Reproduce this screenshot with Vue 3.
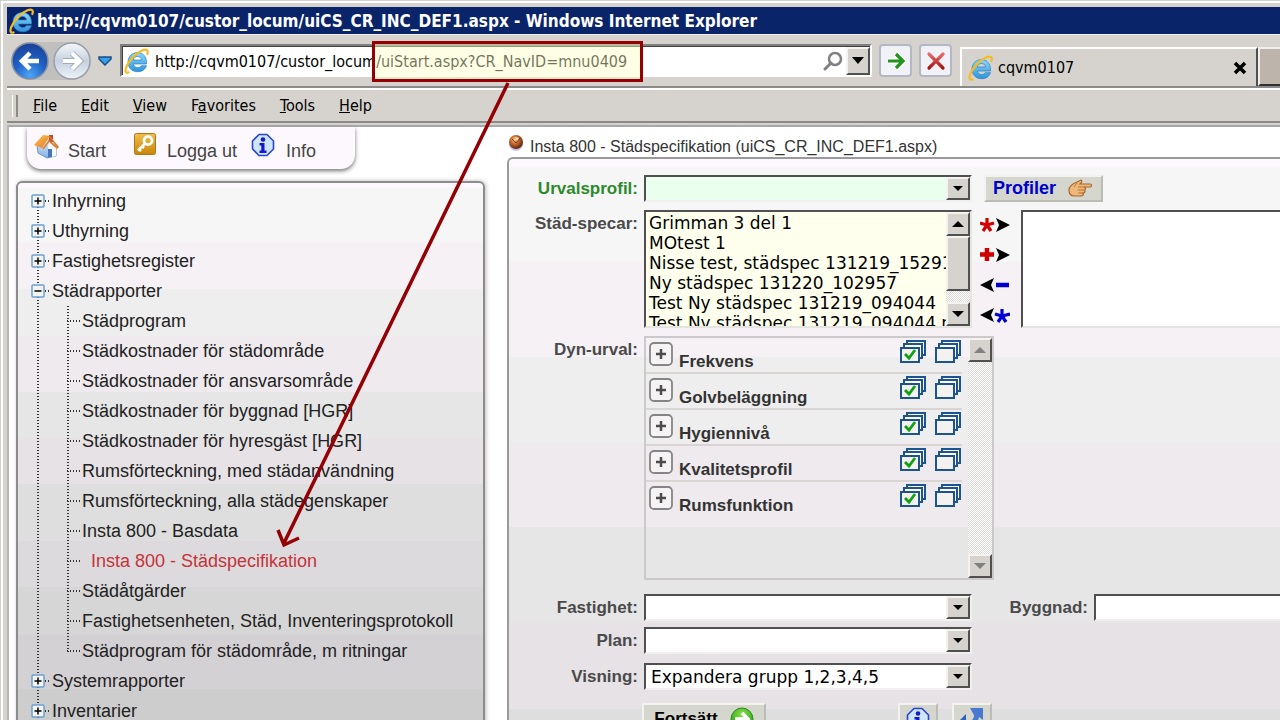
<script setup>
import { ref } from 'vue'

const address = ref('http://cqvm0107/custor_locum/uiStart.aspx?CR_NavID=mnu0409')

const menus = [
  ['', 'F', 'ile'],
  ['', 'E', 'dit'],
  ['', 'V', 'iew'],
  ['F', 'a', 'vorites'],
  ['', 'T', 'ools'],
  ['', 'H', 'elp'],
]

const tree = [
  { name: 'Inhyrning' },
  { name: 'Uthyrning' },
  { name: 'Fastighetsregister' },
  {
    name: 'Städrapporter',
    children: [
      'Städprogram',
      'Städkostnader för städområde',
      'Städkostnader för ansvarsområde',
      'Städkostnader för byggnad [HGR]',
      'Städkostnader för hyresgäst [HGR]',
      'Rumsförteckning, med städanvändning',
      'Rumsförteckning, alla städegenskaper',
      'Insta 800 - Basdata',
      'Insta 800 - Städspecifikation',
      'Städåtgärder',
      'Fastighetsenheten, Städ, Inventeringsprotokoll',
      'Städprogram för städområde, m ritningar',
    ],
  },
  { name: 'Systemrapporter' },
  { name: 'Inventarier' },
]
const current = 'Insta 800 - Städspecifikation'

const specs = [
  'Grimman 3 del 1',
  'MOtest 1',
  'Nisse test, städspec 131219_152917',
  'Ny städspec 131220_102957',
  'Test Ny städspec 131219_094044',
  'Test Ny städspec 131219_094044 ny',
]

const groups = ['Frekvens', 'Golvbeläggning', 'Hygiennivå', 'Kvalitetsprofil', 'Rumsfunktion']
</script>

<template>
  <div class="window">
    <svg class="defs" width="0" height="0" aria-hidden="true">
      <defs>
        <linearGradient id="ieBlue" x1="0" y1="0" x2="0" y2="1">
          <stop offset="0" stop-color="#8ad8fa" />
          <stop offset="1" stop-color="#2f93dc" />
        </linearGradient>
        <linearGradient id="roof" x1="0" y1="0" x2="1" y2="1">
          <stop offset="0" stop-color="#ffc35a" />
          <stop offset="1" stop-color="#e8791c" />
        </linearGradient>
        <linearGradient id="wall" x1="0" y1="0" x2="0" y2="1">
          <stop offset="0" stop-color="#e6f1ff" />
          <stop offset="1" stop-color="#7fb0e4" />
        </linearGradient>
        <linearGradient id="keyBg" x1="0" y1="0" x2="0" y2="1">
          <stop offset="0" stop-color="#f0bf4c" />
          <stop offset="1" stop-color="#c98509" />
        </linearGradient>
        <radialGradient id="ball" cx=".4" cy=".35" r=".65">
          <stop offset="0" stop-color="#ffd9a8" />
          <stop offset=".35" stop-color="#d47a35" />
          <stop offset="1" stop-color="#5f2408" />
        </radialGradient>
        <radialGradient id="navBlue" cx=".5" cy=".9" r=".9">
          <stop offset="0" stop-color="#4ea6f4" />
          <stop offset=".5" stop-color="#1f5fc4" />
          <stop offset="1" stop-color="#1b3f94" />
        </radialGradient>
        <linearGradient id="navPale" x1="0" y1="0" x2="0" y2="1">
          <stop offset="0" stop-color="#f6f8fb" />
          <stop offset=".5" stop-color="#c5d0de" />
          <stop offset="1" stop-color="#edf4fb" />
        </linearGradient>
        <radialGradient id="goGreen" cx=".5" cy=".3" r=".7">
          <stop offset="0" stop-color="#8be04f" />
          <stop offset="1" stop-color="#239a12" />
        </radialGradient>
        <linearGradient id="crossRed" x1="0" y1="0" x2="0" y2="1">
          <stop offset="0" stop-color="#ea6a6a" />
          <stop offset="1" stop-color="#a81414" />
        </linearGradient>
        <symbol id="ie" viewBox="0 0 26 26">
          <path d="M22.500 16H9.500c.3 2.200 1.900 3.600 4.200 3.600 1.700 0 2.900-.7 3.500-1.900h5.200c-1.200 4-4.400 6-8.800 6C7.900 23.700 4 19.800 4 14.200S7.900 4.600 13.500 4.600c5.900 0 9.500 4.600 9 11.400zM9.400 12h8.100c-.2-2.200-1.700-3.500-4-3.500S9.700 9.800 9.400 12z" fill="url(#ieBlue)" stroke="#2b7fc0" stroke-width=".7" />
          <path d="M4.500 24.500C1.500 25.500.6 23 2.400 18.800 5 12.500 12 4.800 18.500 2.300c4.200-1.600 6.200-.3 4.900 3.700" fill="none" stroke="#f6bb22" stroke-width="2.200" stroke-linecap="round" />
        </symbol>
        <symbol id="info" viewBox="0 0 24 24">
          <path d="M8 1.500h8L22.500 8v8L16 22.500H8L1.500 16V8z" fill="#cfe6ff" stroke="#2a46d0" stroke-width="1.600" stroke-linejoin="round" />
          <circle cx="12" cy="6.500" r="2.300" fill="#1717d0" />
          <path d="M8.500 10h5v7.500h2V20h-7v-2.500h1.800v-5H8.500z" fill="#1717d0" />
        </symbol>
        <symbol id="stack" viewBox="0 0 26 23">
          <g fill="#fff" stroke="#1c548f" stroke-width="2">
            <path d="M7 1h18v14H7z" />
            <path d="M4 4h18v14H4z" />
            <path d="M1 8h18v14H1z" fill="#f4f2f0" />
          </g>
        </symbol>
      </defs>
    </svg>

    <header class="titlebar">
      <svg width="26" height="26"><use href="#ie" /></svg>
      <h1>http://cqvm0107/custor_locum/uiCS_CR_INC_DEF1.aspx - Windows Internet Explorer</h1>
    </header>

    <div class="toolbar">
      <div class="nav">
        <button type="button" aria-label="Back">
          <svg width="38" height="38" viewBox="0 0 38 38">
            <circle cx="19" cy="19" r="18" fill="url(#navBlue)" stroke="#8590a4" stroke-width="1.500" />
            <path d="M19 11l-8 8 8 8M12 19h16" fill="none" stroke="#fff" stroke-width="4.500" />
          </svg>
        </button>
        <button type="button" aria-label="Forward">
          <svg width="38" height="38" viewBox="0 0 38 38">
            <circle cx="19" cy="19" r="18" fill="url(#navPale)" stroke="#9aa0aa" stroke-width="1.500" />
            <path d="M19 11l8 8-8 8M26 19H10" fill="none" stroke="#9eabbb" stroke-width="6" />
            <path d="M19 11l8 8-8 8M26 19H10" fill="none" stroke="#fff" stroke-width="4" />
          </svg>
        </button>
      </div>
      <button type="button" class="recent" aria-label="Recent pages">
        <svg width="14" height="10" viewBox="0 0 14 10"><path d="M1 1h12v2L7 9 1 3z" fill="#35a0e8" stroke="#1d4c86" stroke-width="1.500" /></svg>
      </button>
      <div class="address">
        <svg width="26" height="26"><use href="#ie" /></svg>
        <input v-model="address" type="text" aria-label="Address" />
        <svg class="search" width="20" height="20" viewBox="0 0 20 20"><circle cx="12" cy="8" r="6" fill="none" stroke="#808080" stroke-width="2.500" /><path d="M8 12l-6 6" stroke="#808080" stroke-width="3" stroke-linecap="round" /></svg>
        <button type="button" class="raised drop" aria-label="Show address list">
          <svg width="12" height="7" viewBox="0 0 12 7"><path d="M0 0h12L6 7z" /></svg>
        </button>
      </div>
      <button type="button" class="tool" aria-label="Go">
        <svg width="20" height="20" viewBox="0 0 20 20"><path d="M10 3l7 7-7 7M16 10H2" fill="none" stroke="#fff" stroke-width="6" /><path d="M10 3l7 7-7 7M16 10H2" fill="none" stroke="#22931b" stroke-width="3.200" /></svg>
      </button>
      <button type="button" class="tool" aria-label="Stop">
        <svg width="20" height="20" viewBox="0 0 20 20"><path d="M3 3l7 7-7 7M17 3l-7 7 7 7" fill="none" stroke="url(#crossRed)" stroke-width="3.200" stroke-linecap="round" /></svg>
      </button>
      <div class="tab">
        <svg width="26" height="26"><use href="#ie" /></svg>
        <span>cqvm0107</span>
        <button type="button" aria-label="Close tab">
          <svg width="14" height="14" viewBox="0 0 14 14"><path d="M2 2l10 10M12 2L2 12" stroke="#000" stroke-width="3.500" /></svg>
        </button>
      </div>
      <button type="button" class="newtab" aria-label="New tab"></button>
    </div>

    <nav class="menubar">
      <a v-for="m in menus" :key="m[1]" href="#">{{ m[0] }}<u>{{ m[1] }}</u>{{ m[2] }}</a>
    </nav>

    <main class="page">
      <section class="side">
        <nav class="shortcuts">
          <a href="#">
            <svg width="26" height="26" viewBox="0 0 26 26">
              <path d="M16 2h4v7h-4z" fill="#c8432c" />
              <path d="M4 12l9-7 10 8v10l-9 2-9-5z" fill="url(#wall)" stroke="#6b94c8" />
              <path d="M16 8l7 6v9l-8 2V14z" fill="#f3f8ff" />
              <path d="M15 16h4v8l-4 1z" fill="#4676b8" />
              <path d="M1 12L10 2l7 1-8 12z" fill="url(#roof)" />
              <path d="M16 3l9 11-1 1-8-7-6 8" fill="none" stroke="#e8791c" stroke-width="1.500" />
            </svg>
            <span>Start</span>
          </a>
          <a href="#">
            <svg width="22" height="22" viewBox="0 0 22 22">
              <rect x=".5" y=".5" width="21" height="21" rx="2" fill="url(#keyBg)" stroke="#ad7812" />
              <circle cx="14" cy="7.500" r="4" fill="none" stroke="#fff" stroke-width="2.800" />
              <path d="M11 10.500l-7 7M5 16l2 2M8 13l2 2" stroke="#fff" stroke-width="2.500" />
            </svg>
            <span>Logga ut</span>
          </a>
          <a href="#">
            <svg width="24" height="24"><use href="#info" /></svg>
            <span>Info</span>
          </a>
        </nav>

        <div class="treebox">
          <ul class="tree">
            <li v-for="n in tree" :key="n.name">
              <div class="row">
                <button type="button" :aria-label="n.name" :aria-expanded="!!n.children">
                  <svg width="14" height="14" viewBox="0 0 14 14">
                    <rect x="1" y="1" width="12" height="12" rx="1" fill="#f3f3f0" stroke="#6ca0d4" stroke-width="1.500" />
                    <path :d="n.children ? 'M3.500 7h7' : 'M3.500 7h7M7 3.500v7'" stroke="#000" stroke-width="1.500" />
                  </svg>
                </button>
                <i class="dots"></i>
                <a href="#">{{ n.name }}</a>
              </div>
              <ul v-if="n.children" class="sub">
                <li v-for="c in n.children" :key="c" class="row">
                  <i class="dots"></i>
                  <a href="#" :class="{ current: c === current }">{{ c }}</a>
                </li>
              </ul>
            </li>
          </ul>
        </div>
      </section>

      <section class="content">
        <h2>
          <svg width="16" height="18" viewBox="0 0 16 18"><circle cx="8" cy="10" r="7" fill="#c9c3ea" /><circle cx="8" cy="8" r="7" fill="url(#ball)" /><path d="M4 5l4 4 4-5" stroke="#7a3411" fill="none" /><path d="M7 3l4 1-2 3z" fill="#ffe9cc" /></svg>
          Insta 800 - Städspecifikation (uiCS_CR_INC_DEF1.aspx)
        </h2>

        <form class="panel" @submit.prevent>
          <div class="line">
            <label for="profil" class="green">Urvalsprofil:</label>
            <div class="combo mint">
              <select id="profil"><option></option></select>
              <span class="raised"><svg width="10" height="5" viewBox="0 0 10 5"><path d="M0 0h10L5 5z" /></svg></span>
            </div>
            <button type="button" class="flat profiles">
              Profiler
              <svg width="24" height="20" viewBox="0 0 24 20">
                <path d="M9 3L13 1c1 0 1 2 0 3l-1 1h10c2 0 2 3 0 3h-6c2 1 2 3 0 3 2 1 1 3-1 3 1 1 0 3-2 3H6c-3 0-5-2-5-6s3-6 8-8z" fill="#f0b878" stroke="#a8682c" stroke-width="1.200" />
                <path d="M10 8h7M10 11h6M10 14h5M9 4l-3 4" stroke="#b8763a" fill="none" />
              </svg>
            </button>
          </div>

          <div class="line">
            <label for="specs">Städ-specar:</label>
            <div class="listbox">
              <select id="specs" multiple>
                <option v-for="s in specs" :key="s">{{ s }}</option>
              </select>
              <div class="scroll">
                <button type="button" class="raised" aria-label="Scroll up"><svg width="12" height="6" viewBox="0 0 12 6"><path d="M0 6h12L6 0z" /></svg></button>
                <span class="raised thumb"></span>
                <span class="track"></span>
                <button type="button" class="raised" aria-label="Scroll down"><svg width="12" height="6" viewBox="0 0 12 6"><path d="M0 0h12L6 6z" /></svg></button>
              </div>
            </div>
            <div class="transfer">
              <button type="button" aria-label="Add all">
                <svg width="30" height="16" viewBox="0 0 30 16"><path d="M7 8V1M7 8L0 6M7 8l7-2M7 8l-4 6M7 8l4 6" stroke="#d00000" stroke-width="3.200" /><path d="M16 1l14 7-14 7 3-7z" /></svg>
              </button>
              <button type="button" aria-label="Add">
                <svg width="30" height="16" viewBox="0 0 30 16"><path d="M7 1v13M0 7.500h14" stroke="#d00000" stroke-width="4.500" /><path d="M16 1l14 7-14 7 3-7z" /></svg>
              </button>
              <button type="button" aria-label="Remove">
                <svg width="30" height="16" viewBox="0 0 30 16"><path d="M14 1L0 8l14 7-3-7z" /><path d="M16 8h13" stroke="#0000d0" stroke-width="4.500" /></svg>
              </button>
              <button type="button" aria-label="Remove all">
                <svg width="30" height="16" viewBox="0 0 30 16"><path d="M14 1L0 8l14 7-3-7z" /><path d="M22 9V2M22 9l-7-2M22 9l8-2M22 9l-4 6M22 9l4 6" stroke="#0000d0" stroke-width="3.200" /></svg>
              </button>
            </div>
            <select class="chosen" multiple aria-label="Valda städ-specar"></select>
          </div>

          <div class="line">
            <span class="caption">Dyn-urval:</span>
            <div class="dyn">
              <ul>
                <li v-for="g in groups" :key="g">
                  <button type="button" class="expand" :aria-label="g">
                    <svg width="24" height="24" viewBox="0 0 24 24"><rect x="1" y="1" width="22" height="22" rx="4" fill="#f5f3f3" stroke="#858585" stroke-width="1.800" /><path d="M7 12h10M12 7v10" stroke="#4c4c4c" stroke-width="2.500" /></svg>
                  </button>
                  <b>{{ g }}</b>
                  <button type="button" aria-label="Markera alla">
                    <svg width="26" height="23" viewBox="0 0 26 23"><use href="#stack" width="26" height="23" /><path d="M5 14l4 4 6-8" fill="none" stroke="#12a012" stroke-width="2.800" /></svg>
                  </button>
                  <button type="button" aria-label="Avmarkera alla">
                    <svg width="26" height="23"><use href="#stack" width="26" height="23" /></svg>
                  </button>
                </li>
              </ul>
              <div class="scroll idle">
                <button type="button" class="raised" aria-label="Scroll up"><svg width="12" height="6" viewBox="0 0 12 6"><path d="M0 6h12L6 0z" /></svg></button>
                <span class="track"></span>
                <button type="button" class="raised" aria-label="Scroll down"><svg width="12" height="6" viewBox="0 0 12 6"><path d="M0 0h12L6 6z" /></svg></button>
              </div>
            </div>
          </div>

          <div class="line apart">
            <label for="fastighet">Fastighet:</label>
            <div class="combo">
              <select id="fastighet"><option></option></select>
              <span class="raised"><svg width="10" height="5" viewBox="0 0 10 5"><path d="M0 0h10L5 5z" /></svg></span>
            </div>
            <label for="byggnad" class="second">Byggnad:</label>
            <div class="combo">
              <select id="byggnad"><option></option></select>
              <span class="raised"><svg width="10" height="5" viewBox="0 0 10 5"><path d="M0 0h10L5 5z" /></svg></span>
            </div>
          </div>

          <div class="line near">
            <label for="plan">Plan:</label>
            <div class="combo">
              <select id="plan"><option></option></select>
              <span class="raised"><svg width="10" height="5" viewBox="0 0 10 5"><path d="M0 0h10L5 5z" /></svg></span>
            </div>
          </div>

          <div class="line">
            <label for="visning">Visning:</label>
            <div class="combo">
              <select id="visning"><option>Expandera grupp 1,2,3,4,5</option></select>
              <span class="raised"><svg width="10" height="5" viewBox="0 0 10 5"><path d="M0 0h10L5 5z" /></svg></span>
            </div>
          </div>

          <div class="actions">
            <button type="submit" class="flat go">
              Fortsätt
              <svg width="24" height="24" viewBox="0 0 24 24"><circle cx="12" cy="12" r="11" fill="url(#goGreen)" stroke="#2f8f1c" /><path d="M12 6l6 6-6 6M17 12H5" fill="none" stroke="#fff" stroke-width="3.500" /></svg>
            </button>
            <button type="button" class="flat" aria-label="Info">
              <svg width="24" height="24"><use href="#info" /></svg>
            </button>
            <button type="button" class="flat" aria-label="Återställ">
              <svg width="26" height="26" viewBox="0 0 26 26"><path d="M11 2h13v12l-4-3c-1 6-5 9-11 9v-5c4 0 6-2 6-6z" fill="#4a78cf" /><path d="M1 14l6-6v12z" fill="#2f5fbd" /></svg>
            </button>
          </div>
        </form>
      </section>
    </main>

    <div class="callout"></div>
    <svg class="pointer" width="240" height="470" viewBox="0 0 240 470">
      <path d="M236 2L12 462M6 449l6 15 15-7" fill="none" stroke="#940004" stroke-width="3.500" />
    </svg>
  </div>
</template>

<style>
html,
body {
  margin: 0;
  background: #fff;
}
</style>

<style scoped>
* {
  box-sizing: border-box;
}
.window {
  position: relative;
  display: flex;
  flex-direction: column;
  height: 100vh;
  overflow: hidden;
  padding: 3px 0 0 3px;
  border-top: 1px solid #d0d0cc;
  border-left: 1px solid #d0d0cc;
  background: #d6d3ce;
  box-shadow: inset 2px 2px 0 #fff;
  font-family: "Liberation Sans", Arial, sans-serif;
  color: #000;
}
.defs {
  position: absolute;
}
button {
  padding: 0;
  border: 0;
  background: none;
  font: inherit;
  color: inherit;
}
svg {
  display: block;
  flex: none;
}
a {
  color: inherit;
  text-decoration: none;
}
ul {
  margin: 0;
  padding: 0;
  list-style: none;
}
.titlebar,
.toolbar,
.menubar,
.page {
  margin-left: 3px;
}
.titlebar {
  display: flex;
  align-items: center;
  gap: 2px;
  flex: none;
  height: 27px;
  margin-top: 3px;
  padding-left: 2px;
  background: #0a246a;
  color: #fff;
}
.titlebar h1 {
  margin: 0;
  font: bold 17px/26px "DejaVu Sans Condensed", "DejaVu Sans", sans-serif;
  white-space: nowrap;
}
.toolbar {
  display: flex;
  align-items: center;
  flex: none;
  height: 54px;
  padding-left: 4px;
  border-top: 1px solid #f2f0ee;
  border-bottom: 2px solid #8c8a88;
  font: 16px/20px "DejaVu Sans Condensed", "DejaVu Sans", sans-serif;
}
.nav {
  display: flex;
  gap: 4px;
  border-radius: 20px;
  background: #c2c0be;
}
.recent {
  margin: 0 8px 0 7px;
}
.address {
  display: flex;
  align-items: center;
  flex: 0 1 752px;
  height: 33px;
  border: 2px solid #808080;
  border-right-color: #fff;
  border-bottom-color: #fff;
  background: #fff;
  box-shadow: inset 1px 1px 0 #404040;
  padding-left: 2px;
}
.address input {
  flex: 1;
  min-width: 0;
  margin-left: 5px;
  padding: 2px 0 0;
  border: 0;
  outline: 0;
  background: none;
  font: 16px/22px "DejaVu Sans Condensed", "DejaVu Sans", sans-serif;
  color: #000;
}
.search {
  margin-right: 3px;
}
.raised {
  display: flex;
  align-items: center;
  justify-content: center;
  border: 2px solid #f4f3f0;
  border-right-color: #505050;
  border-bottom-color: #505050;
  background: #d6d3ce;
}
.drop {
  width: 24px;
  height: 28px;
}
.tool {
  display: flex;
  align-items: center;
  justify-content: center;
  width: 33px;
  height: 33px;
  margin-left: 7px;
  border: 2px solid #b4b8c4;
  border-radius: 4px;
  background: #f1f1f8;
}
.tab {
  display: flex;
  align-items: center;
  align-self: flex-end;
  flex: 1;
  height: 39px;
  margin-left: 8px;
  padding: 0 9px 0 6px;
  border: 2px solid #fff;
  border-right-color: #505050;
  border-bottom: 0;
}
.tab span {
  flex: 1;
  margin-left: 4px;
}
.newtab {
  align-self: flex-end;
  width: 22px;
  height: 39px;
  border: 2px solid #f0eeec;
  border-right: 0;
  border-bottom-color: #303030;
  background: #bdb5ab;
}
.menubar {
  display: flex;
  align-items: center;
  gap: 24px;
  flex: none;
  height: 35px;
  padding-left: 5px;
  border-top: 2px solid #fff;
  border-bottom: 2px solid #8c8a88;
  font: 16px/20px "DejaVu Sans Condensed", "DejaVu Sans", sans-serif;
}
.menubar::before {
  content: "";
  width: 3px;
  height: 22px;
  margin-right: -9px;
  border-right: 2px solid #8c8a88;
  border-left: 1px solid #fff;
}
.page {
  display: flex;
  flex: 1;
  min-height: 0;
  margin-top: 2px;
  border-top: 2px solid #a8a8a8;
  border-left: 2px solid #b8b8b8;
  background: #fff;
}
.side {
  flex: 0 0 476px;
  padding-left: 7px;
}
.shortcuts {
  display: flex;
  width: 328px;
  height: 42px;
  margin-left: 11px;
  padding: 6px 6px 0;
  border-radius: 0 0 14px 14px;
  background: #fdf8fd;
  box-shadow: 0 2px 4px #777;
  font-size: 18px;
  line-height: 24px;
  color: #444;
}
.shortcuts a {
  display: flex;
  align-items: flex-start;
  gap: 9px;
  margin-right: 28px;
}
.shortcuts a + a {
  gap: 11px;
  margin-right: 14px;
}
.shortcuts span {
  padding-top: 6px;
}
.treebox {
  margin-top: 12px;
  padding: 3px 12px 0;
  border: 2px solid #8c8c8c;
  border-radius: 6px 6px 0 0;
  background: linear-gradient(#fdf8fd 5px, #f6f6f6 5px 59px, #f5f1f5 59px 106px, #eee 106px 153px, #eeeaee 153px 209px, #e6e6e6 209px 255px, #e6e2e6 255px 301px, #dedede 301px 358px, #dddadd 358px 404px, #d6d6d6 404px 452px, #d4d1d5 452px 506px, #cdcdcd 506px);
  box-shadow: 1px 0 4px #bbb;
}
.tree {
  font-size: 18px;
  line-height: 30px;
  color: #222;
}
.tree > li {
  background: repeating-linear-gradient(#333 0 1px, transparent 1px 3px) 7px 0 / 2px 100% no-repeat;
}
.tree > li:first-child {
  background-position: 7px 15px;
}
.row {
  display: flex;
  align-items: center;
  height: 30px;
  white-space: nowrap;
}
.row button {
  margin-left: 1px;
}
.dots {
  width: 6px;
  height: 2px;
  background: repeating-linear-gradient(90deg, #333 0 1px, transparent 1px 3px);
}
.tree .row > a {
  margin-left: 1px;
}
.sub {
  margin-left: 37px;
  background: repeating-linear-gradient(#333 0 1px, transparent 1px 3px) 0 0 / 2px 346px no-repeat;
}
.sub .dots {
  width: 14px;
}
.tree .row > .current {
  margin-left: 10px;
  color: #c4343a;
}
.content {
  flex: 1;
  min-width: 0;
  padding-left: 22px;
}
h2 {
  display: flex;
  align-items: center;
  gap: 6px;
  height: 30px;
  margin: 0;
  padding: 10px 0 0 1px;
  font-size: 16px;
  font-weight: normal;
  line-height: 20px;
  color: #333;
  white-space: nowrap;
}
h2 svg {
  margin-bottom: 8px;
}
.panel {
  height: 600px;
  padding-top: 16px;
  border: 2px solid #9a9a9a;
  border-right: 0;
  border-radius: 6px 0 0 0;
  background: linear-gradient(#fdf8fd 8px, #f6f6f6 8px 103px, #f5f1f5 103px 198px, #eee 198px 283px, #eeeaee 283px 368px, #e6e6e6 368px 464px, #e6e2e6 464px 550px, #dedede 550px);
  font-size: 17px;
}
.line {
  display: flex;
  align-items: flex-start;
  margin-bottom: 8px;
  overflow: hidden;
}
.apart {
  margin-top: 14px;
}
.apart,
.near {
  margin-bottom: 6px;
}
.near {
  margin-bottom: 9px;
}
.line > label,
.caption {
  flex: 0 0 129px;
  margin-right: 6px;
  font-weight: bold;
  line-height: 27px;
  text-align: right;
  color: #4a4a4a;
}
.line > .green {
  color: #2c8a2c;
}
.line > .second {
  flex-basis: 116px;
}
.combo {
  display: grid;
  grid-template-columns: 1fr 24px;
  flex: 0 0 328px;
  height: 27px;
  border: 2px solid #505050;
  border-right-color: #f0f0ee;
  border-bottom-color: #f0f0ee;
  background: #fff;
}
.mint {
  background: #eaffee;
}
.combo select,
.combo span {
  grid-row: 1;
}
.combo select {
  grid-column: 1 / 3;
  width: 100%;
  padding: 0 5px;
  border: 0;
  outline: 0;
  appearance: none;
  background: none;
  font: 17px/22px "DejaVu Sans", sans-serif;
  color: #000;
}
.combo span {
  grid-column: 2;
  pointer-events: none;
}
.flat {
  display: flex;
  align-items: center;
  border: 2px solid #f2f2ee;
  border-right-color: #bcbcb6;
  border-bottom-color: #bcbcb6;
  background: #d5d6ce;
  font-weight: bold;
}
.profiles {
  gap: 12px;
  height: 27px;
  margin-left: 12px;
  padding: 0 9px 0 7px;
  font-size: 18px;
  color: #0000cc;
}
.listbox {
  display: flex;
  flex: 0 0 328px;
  min-width: 0;
  height: 118px;
  border: 2px solid #505050;
  border-right-color: #e4e4e0;
  border-bottom-color: #e4e4e0;
  background: #ffffee;
}
.listbox select {
  flex: 1 1 0;
  width: 0;
  min-width: 0;
  height: 114px;
  padding: 1px 0 0;
  border: 0;
  border-radius: 0;
  outline: 0;
  overflow: hidden;
  background: none;
  font: 17px/20px "DejaVu Sans", sans-serif;
  color: #000;
}
.listbox option {
  height: 20px;
  min-height: 20px;
  padding: 0 3px;
}
.scroll {
  display: flex;
  flex-direction: column;
  flex: 0 0 24px;
}
.scroll .raised {
  width: 24px;
  height: 24px;
  flex: none;
}
.scroll .thumb {
  height: 55px;
}
.idle path {
  fill: #808080;
}
.track {
  flex: 1;
  background: repeating-conic-gradient(#dcdad6 0 25%, #fff 0 50%) 0 0 / 2px 2px;
}
.transfer {
  display: flex;
  flex-direction: column;
  gap: 14px;
  margin: 7px 11px 0 8px;
}
.chosen {
  flex: 1;
  min-width: 0;
  height: 118px;
  border: 2px solid #505050;
  border-bottom-color: #e4e4e0;
  border-right: 0;
  border-radius: 0;
  outline: 0;
  background: #fff;
}
.dyn {
  display: flex;
  flex: 0 0 350px;
  height: 244px;
  border: 2px solid #cbc9ca;
}
.dyn ul {
  flex: 1;
  margin-right: 6px;
}
.dyn li {
  display: flex;
  align-items: flex-start;
  gap: 9px;
  height: 36px;
  padding: 2px 1px 0 3px;
  border-bottom: 2px solid #d9d5d2;
}
.dyn li:last-child {
  border-bottom: 0;
}
.dyn .expand {
  margin-top: 2px;
}
.dyn b {
  flex: 1;
  margin-left: -3px;
  padding-top: 12px;
  line-height: 20px;
  color: #333;
}
.dyn .scroll {
  flex-basis: 24px;
}
.actions {
  display: flex;
  margin: 13px 0 0 133px;
}
.actions .flat {
  justify-content: center;
  width: 40px;
  height: 32px;
  margin-left: 14px;
}
.actions .go {
  gap: 12px;
  width: 124px;
  margin: 0 118px 0 0;
}
.callout {
  position: absolute;
  top: 40px;
  left: 371px;
  width: 271px;
  height: 41px;
  border: 3px solid #940004;
  background: rgba(255, 255, 200, 0.45);
}
.pointer {
  position: absolute;
  top: 80px;
  left: 271px;
  pointer-events: none;
}
</style>
